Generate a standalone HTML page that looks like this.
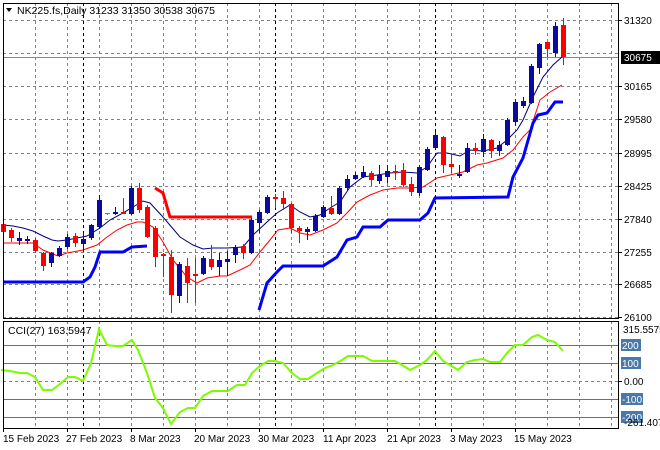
<!DOCTYPE html>
<html><head><meta charset="utf-8"><style>
html,body{margin:0;padding:0;background:#fff;width:660px;height:450px;overflow:hidden}
svg{display:block;font-family:"Liberation Sans",sans-serif}
</style></head><body>
<svg width="660" height="450" viewBox="0 0 660 450" xmlns="http://www.w3.org/2000/svg">
<rect width="660" height="450" fill="#fff"/>
<g stroke="#7a8290" stroke-width="1" stroke-dasharray="3,3" fill="none" id="grid">
<path d="M3 20.5H619M3 53.5H619M3 86.5H619M3 119.5H619M3 153.5H619M3 186.5H619M3 219.5H619M3 252.5H619M3 284.5H619M3 317.5H619"/>
<path d="M35.5 3V319M67.5 3V319M99.5 3V319M131.5 3V319M163.5 3V319M195.5 3V319M227.5 3V319M259.5 3V319M291.5 3V319M323.5 3V319M355.5 3V319M387.5 3V319M419.5 3V319M451.5 3V319M483.5 3V319M515.5 3V319M547.5 3V319M579.5 3V319M611.5 3V319"/>
<path d="M35.5 321V428M67.5 321V428M99.5 321V428M131.5 321V428M163.5 321V428M195.5 321V428M227.5 321V428M259.5 321V428M291.5 321V428M323.5 321V428M355.5 321V428M387.5 321V428M419.5 321V428M451.5 321V428M483.5 321V428M515.5 321V428M547.5 321V428M579.5 321V428M611.5 321V428"/>
<path d="M3 381.5H619"/>
</g>
<g stroke="#000" stroke-dasharray="3,3" fill="none">
<path d="M83.5 3V319M275.5 3V319M435.5 3V319M83.5 321V428M275.5 321V428M435.5 321V428"/>
</g>
<path d="M3 57.5H619" stroke="#808890" stroke-width="1"/>
<g stroke="#4a78a8" stroke-width="1">
<path d="M3 345.5H619M3 363.5H619M3 399.5H619M3 417.5H619"/>
</g>
<polyline fill="none" stroke="#00007a" stroke-width="1" points="3,225 13,226 23,228 33,231 43,236 52,240 58,241 67,240 77,238 87,236 100,228 110,220 123,213 133,207 143,201 150,203 163,217 180,237 193,245 203,249 213,248 227,248 243,247 253,235 267,222 277,213 290,205 300,212 310,217 320,215 330,208 340,202 350,187 363,177 377,175 390,173 403,172 417,173 427,167 437,153 447,153 460,156 470,150 483,151 497,148 507,140 517,130 523,120 533,97 543,77 553,65 562,57"/>
<polyline fill="none" stroke="#ff0000" stroke-width="1" points="3,243 33,243 43,250 58,256 67,253 83,250 97,245 107,237 117,230 127,225 137,222 143,222 153,227 163,242 173,260 187,277 197,283 207,278 220,276 227,276 240,270 250,265 260,252 270,240 278,230 290,228 300,233 310,235 323,230 337,223 347,213 357,202 370,195 383,190 397,188 410,188 423,187 437,178 450,175 463,172 477,165 487,163 503,158 513,150 523,137 530,130 540,100 550,92 562,85"/>
<g fill="none" stroke-width="3">
<polyline stroke="#0000ff" points="3,282 83,282 90,277 95,267 100,252 123,252 132,247 147,246"/>
<polyline stroke="#ff0000" points="155,188 163,193 170,217 252,217"/>
<polyline stroke="#0000ff" points="259,310 267,283 277,272 283,266 323,266 337,257 347,240 357,237 363,227 380,227 388,220 420,220 428,213 435,198 508,197 513,177 523,158 533,123 538,115 547,113 555,102 563,102"/>
</g>
<g id="candles"></g>
<polyline fill="none" stroke="#7cfc00" stroke-width="2" points="1,370 10,371 20,373 27,373 35,377 43,390 52,390 60,384 68,377 75,377 83,381 91,363 99,329 107,345 115,346 123,346 132,340 138,350 147,373 155,398 163,408 171,424 180,412 188,408 195,408 203,396 212,391 228,391 237,385 245,385 252,373 260,366 268,361 275,361 283,363 292,373 300,379 308,379 317,373 325,368 333,365 342,360 348,356 363,356 372,361 395,361 402,365 410,370 420,365 427,360 435,351 443,361 450,365 458,370 467,362 475,360 483,359 490,362 500,362 507,353 515,345 523,345 532,337 538,335 547,340 555,342 563,351"/>
<rect x="3.5" y="3.5" width="615" height="315" fill="none" stroke="#000"/>
<rect x="3.5" y="321.5" width="615" height="107" fill="none" stroke="#000"/>
<g font-size="10" fill="#000">
<text x="624" y="24">31320</text>
<text x="624" y="90">30165</text>
<text x="624" y="123">29580</text>
<text x="624" y="157">28995</text>
<text x="624" y="190">28425</text>
<text x="624" y="223">27840</text>
<text x="624" y="256">27255</text>
<text x="624" y="288">26685</text>
<text x="624" y="321">26100</text>
</g>
<g stroke="#000"><path d="M619 20.5H622M619 86.5H622M619 119.5H622M619 153.5H622M619 186.5H622M619 219.5H622M619 252.5H622M619 284.5H622M619 317.5H622M619 381.5H622"/></g>
<rect x="621" y="51" width="39" height="13" fill="#000"/>
<text x="624" y="61" font-size="10" fill="#fff">30675</text>
<g font-size="10">
<text x="623" y="333" fill="#000">315.5575</text>
<rect x="621" y="339" width="20" height="12" fill="#4a78a8"/><text x="622" y="349" fill="#fff">200</text>
<rect x="621" y="357" width="20" height="12" fill="#4a78a8"/><text x="622" y="367" fill="#fff">100</text>
<text x="624" y="385" fill="#000">0.00</text>
<rect x="621" y="393" width="22" height="12" fill="#4a78a8"/><text x="622" y="403" fill="#fff">-100</text>
<rect x="621" y="411" width="22" height="12" fill="#4a78a8"/><text x="622" y="421" fill="#fff">-200</text>
<text x="624" y="426" fill="#000">-261.4073</text>
</g>
<path d="M6 8L12 8L9 12Z" fill="#000"/>
<text x="17" y="14" font-size="10.5" fill="#000">NK225.fs,Daily  31233 31350 30538 30675</text>
<text x="8" y="334" font-size="10.5" fill="#000">CCI(27) 163.5947</text>
<g font-size="10" fill="#000">
<text x="3" y="442">15 Feb 2023</text>
<text x="66" y="442">27 Feb 2023</text>
<text x="130" y="442">8 Mar 2023</text>
<text x="194" y="442">20 Mar 2023</text>
<text x="258" y="442">30 Mar 2023</text>
<text x="323" y="442">11 Apr 2023</text>
<text x="387" y="442">21 Apr 2023</text>
<text x="450" y="442">3 May 2023</text>
<text x="514" y="442">15 May 2023</text>
</g>
<g stroke="#000"><path d="M3.5 428V432M67.5 428V432M131.5 428V432M195.5 428V432M259.5 428V432M323.5 428V432M387.5 428V432M451.5 428V432M515.5 428V432"/></g>
</svg>
<script>
var C=[[3,220,234,224,232,0],[11,228,242,230,238,0],[19,232,245,238,241,1],[27,236,244,239,241,1],[35,238,253,240,251,0],[43,252,271,253,266,0],[51,252,267,253,263,1],[59,246,257,248,256,1],[67,234,249,237,247,1],[75,233,247,236,243,0],[83,233,250,239,244,1],[91,224,240,225,238,1],[99,195,229,200,227,1],[107,213,215,213,214,2],[115,207,215,212,214,1],[123,198,214,212,214,0],[131,186,215,188,214,1],[139,183,213,188,210,0],[147,205,238,207,237,0],[155,226,267,228,257,0],[163,253,277,254,256,0],[171,250,313,257,295,0],[179,262,303,264,296,1],[187,258,303,266,283,0],[195,258,303,274,276,0],[203,256,275,258,274,1],[211,245,270,259,267,0],[219,253,276,260,267,1],[227,251,276,259,262,1],[235,245,263,247,255,1],[243,244,259,246,253,0],[251,218,254,220,253,1],[259,210,233,212,223,1],[267,195,214,197,213,1],[275,194,208,197,199,0],[283,191,210,198,204,0],[291,203,233,204,228,0],[299,226,243,228,231,0],[307,227,240,229,232,1],[315,214,232,216,231,1],[323,205,218,207,217,1],[331,196,215,208,214,0],[339,186,215,188,214,1],[347,175,190,179,188,1],[355,172,180,175,179,1],[363,166,178,172,177,1],[371,171,186,173,180,0],[379,165,184,175,181,1],[387,165,183,171,177,1],[395,165,180,171,173,0],[403,163,187,170,185,0],[411,177,196,184,192,0],[419,165,196,167,193,1],[427,147,171,149,170,1],[435,132,149,135,148,1],[443,136,173,137,165,0],[451,155,173,164,167,0],[459,165,178,174,176,1],[467,143,173,148,172,1],[475,143,155,148,151,0],[483,134,157,139,152,1],[491,139,158,140,151,0],[499,141,156,145,151,1],[507,118,146,120,145,1],[515,99,126,102,122,1],[523,97,108,101,106,1],[531,64,104,66,103,1],[539,43,74,44,68,1],[547,42,57,42,49,0],[555,22,57,26,53,1],[563,18,65,25,57,0]];
var col=['#ff0000','#0a0aa0','#00d000'];var s='';
C.forEach(function(c){var k=col[c[5]];s+='<rect x="'+c[0]+'" y="'+c[1]+'" width="1" height="'+(c[2]-c[1])+'" fill="'+k+'"/>';s+='<rect x="'+(c[0]-2)+'" y="'+c[3]+'" width="5" height="'+Math.max(1,c[4]-c[3])+'" fill="'+k+'"/>';});
document.getElementById('candles').innerHTML=s;
</script>
</body></html>
